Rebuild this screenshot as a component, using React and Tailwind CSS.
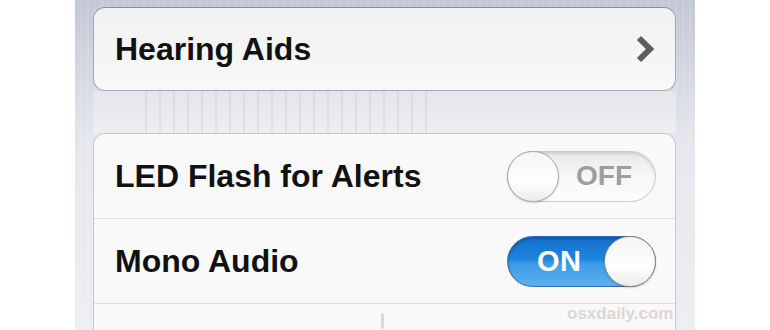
import React from "react";

function Chevron() {
  return (
    <svg width="20" height="28" viewBox="0 0 20 28" className="shrink-0">
      <polyline
        points="4,3 15,14 4,25"
        fill="none"
        stroke="#5e5e5e"
        strokeWidth="6"
        strokeLinecap="butt"
        strokeLinejoin="miter"
      />
    </svg>
  );
}

function Toggle({ on }) {
  if (on) {
    return (
      <div className="relative w-[149px] h-[51px] rounded-full border border-[#2c6fb8] bg-[linear-gradient(to_bottom,#1470cf_0%,#1f84dc_45%,#3d9ce8_55%,#5db0f0_100%)] shadow-[inset_0_2px_3px_rgba(0,0,0,0.25)] flex items-center">
        <span className="pl-[29px] text-[29px] font-bold text-white leading-none tracking-[0.5px]">ON</span>
        <div className="absolute right-[-1px] top-[-1px] w-[52px] h-[51px] rounded-full border border-[#8a8a8a] bg-[linear-gradient(to_bottom,#f4f4f4,#ffffff_60%,#ececec)] shadow-[0_1px_2px_rgba(0,0,0,0.2)]" />
      </div>
    );
  }
  return (
    <div className="relative w-[149px] h-[51px] rounded-full border border-[#c9c9c9] bg-[linear-gradient(to_bottom,#e9e9e9,#f7f7f7_50%,#fdfdfd)] shadow-[inset_0_2px_3px_rgba(0,0,0,0.12)] flex items-center justify-end">
      <span className="pr-[23px] text-[28px] font-bold text-[#9e9e9e] leading-none">OFF</span>
      <div className="absolute left-[-1px] top-[-1px] w-[52px] h-[51px] rounded-full border border-[#a5a5a5] bg-[linear-gradient(to_bottom,#f6f6f6,#ffffff_60%,#ebebeb)] shadow-[0_1px_2px_rgba(0,0,0,0.15)]" />
    </div>
  );
}

export default function App() {
  return (
    <div
      className="w-[770px] h-[330px] bg-white overflow-hidden"
      style={{ fontFamily: '"Liberation Sans", Arial, sans-serif' }}
    >
      <div className="relative mx-auto w-[620px] h-[330px] pl-[18px] pr-[19px] pt-[7px] bg-[linear-gradient(to_bottom,#c2c8d5_0%,#d6dae3_25%,#e6e8ed_45%,#eceef1_100%)]">
        <div className="absolute inset-0 bg-[repeating-linear-gradient(to_right,rgba(255,255,255,0)_0px,rgba(255,255,255,0)_5px,rgba(255,255,255,0.1)_5px,rgba(255,255,255,0.1)_7px)]" />
        <div className="relative flex flex-col">
          {/* Hearing Aids card */}
          <div className="h-[84px] rounded-[12px] border border-[#a4a8b0] border-t-[#8c9099] bg-[linear-gradient(to_bottom,#f1f1f1,#f8f8f8)] flex items-center justify-between pl-[21px] pr-[20px]">
            <span className="text-[32px] font-bold text-[#111] leading-none">Hearing Aids</span>
            <Chevron />
          </div>

          {/* spacer with stripes */}
          <div className="h-[42px] bg-[linear-gradient(to_bottom,#e4e6eb,#eceef1)]">
            <div className="h-full w-[300px] ml-[40px] bg-[repeating-linear-gradient(to_right,rgba(190,195,205,0)_0px,rgba(190,195,205,0)_12px,rgba(190,195,205,0.3)_12px,rgba(190,195,205,0.3)_14px)]" />
          </div>

          {/* Settings card */}
          <div className="rounded-t-[12px] border border-b-0 border-[#c6c9cf] bg-[#f9f9f9] flex flex-col">
            <div className="h-[85px] flex items-center justify-between pl-[21px] pr-[19px] border-b border-[#dedede]">
              <span className="text-[32px] font-bold text-[#111] leading-none">LED Flash for Alerts</span>
              <Toggle on={false} />
            </div>
            <div className="h-[85px] flex items-center justify-between pl-[21px] pr-[19px] border-b border-[#dedede]">
              <span className="text-[32px] font-bold text-[#111] leading-none">Mono Audio</span>
              <Toggle on={true} />
            </div>
            <div className="h-[40px] relative">
              <div className="absolute left-[287px] top-[9px] w-[3px] h-[16px] bg-[#dadada] rounded-sm" />
            </div>
          </div>
        </div>

        <span className="absolute left-[492px] top-[305px] text-[17px] font-bold text-[#ddd6d2] leading-none">osxdaily.com</span>
      </div>
    </div>
  );
}
